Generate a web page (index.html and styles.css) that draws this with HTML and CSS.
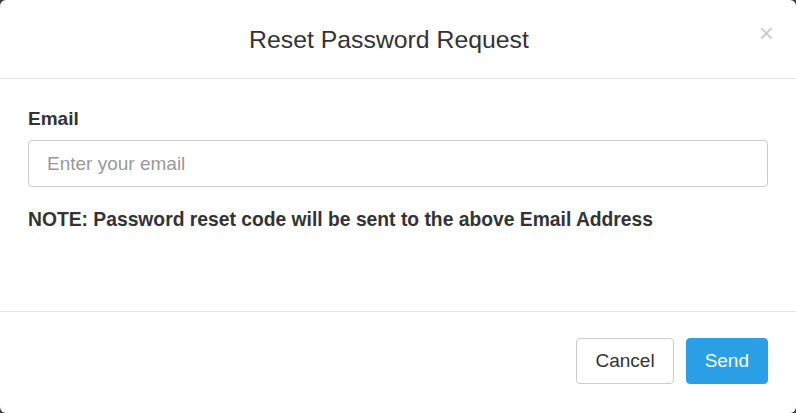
FILE: index.html
```html
<!DOCTYPE html>
<html>
<head>
<meta charset="utf-8">
<link rel="stylesheet" href="styles.css">
</head>
<body>
<div class="modal">
  <div class="modal-header">
    <h4 class="modal-title">Reset Password Request</h4>
    <button class="close" type="button">×</button>
  </div>
  <div class="modal-body">
    <label class="label" for="email">Email</label>
    <input id="email" class="input" type="email" placeholder="Enter your email">
    <p class="note">NOTE: Password reset code will be sent to the above Email Address</p>
  </div>
  <div class="modal-footer">
    <button class="btn btn-default" type="button">Cancel</button>
    <button class="btn btn-primary" type="button">Send</button>
  </div>
</div>
</body>
</html>
```

FILE: styles.css
```css
html, body {
  margin: 0;
  padding: 0;
  height: 100%;
}
body {
  background: #3c3c3c;
  font-family: "Liberation Sans", Arial, sans-serif;
  color: #333;
  overflow: hidden;
}
.modal {
  box-sizing: border-box;
  width: 796px;
  height: 413px;
  background: #fff;
  border-radius: 6px;
  display: flex;
  flex-direction: column;
}
.modal-header {
  position: relative;
  height: 78px;
  flex: none;
  padding-right: 18px;
  border-bottom: 1px solid #e5e5e5;
  display: flex;
  align-items: center;
  justify-content: center;
}
.modal-title {
  margin: 0;
  font-size: 24.8px;
  font-weight: normal;
  color: #333;
  line-height: 30px;
  padding-top: 2px;
}
.close {
  position: absolute;
  right: 22px;
  top: 20px;
  background: none;
  border: 0;
  padding: 0;
  font-family: "Liberation Sans", Arial, sans-serif;
  font-size: 26px;
  line-height: 26px;
  color: #000;
  opacity: 0.2;
}
.modal-body {
  flex: 1;
  padding: 29px 28px 0 28px;
  border-bottom: 1px solid #e5e5e5;
}
.label {
  display: block;
  font-weight: bold;
  font-size: 19px;
  line-height: 22px;
  margin-bottom: 10px;
}
.input {
  display: block;
  box-sizing: border-box;
  width: 100%;
  height: 47px;
  border: 1px solid #ccc;
  border-radius: 4px;
  padding: 0 18px;
  font-family: "Liberation Sans", Arial, sans-serif;
  font-size: 19px;
  color: #555;
  outline: none;
}
.input::placeholder {
  color: #999;
}
.note {
  margin: 21px 0 0 0;
  font-weight: bold;
  font-size: 19.3px;
  line-height: 24px;
}
.modal-footer {
  height: 101px;
  flex: none;
  box-sizing: border-box;
  padding: 26px 28px 0 28px;
  display: flex;
  justify-content: flex-end;
  align-items: flex-start;
  gap: 12px;
}
.btn {
  box-sizing: border-box;
  height: 46px;
  padding: 0 18px;
  border-radius: 4px;
  font-family: "Liberation Sans", Arial, sans-serif;
  font-size: 19px;
}
.btn-default {
  background: #fff;
  border: 1px solid #ccc;
  color: #333;
}
.btn-primary {
  background: #2b9fe6;
  border: 1px solid #2b9fe6;
  color: #fff;
}
```
